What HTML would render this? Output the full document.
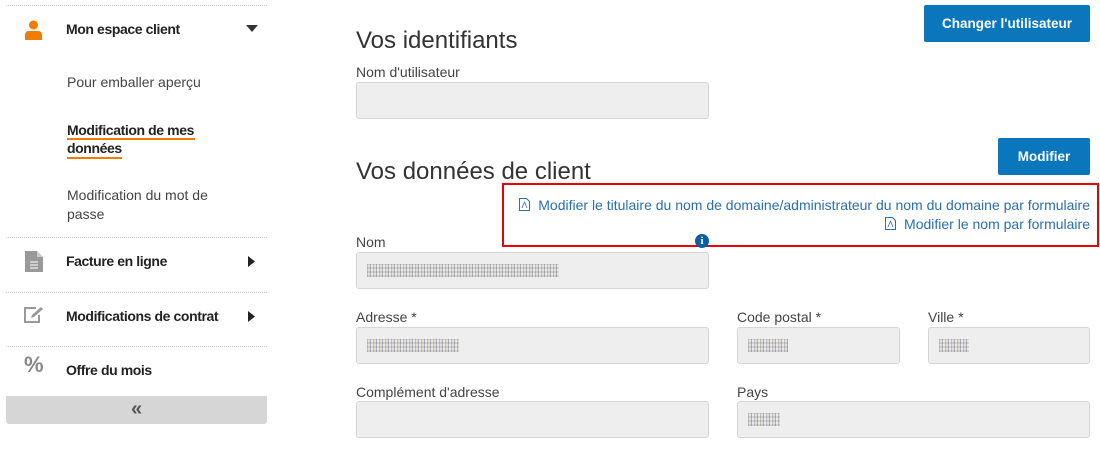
<!DOCTYPE html>
<html><head><meta charset="utf-8"><style>
*{margin:0;padding:0;box-sizing:border-box}
body{width:1100px;height:450px;background:#fff;font-family:"Liberation Sans",sans-serif;color:#333;position:relative;overflow:hidden}
.a{position:absolute;white-space:nowrap}
.sep{position:absolute;left:6px;width:261px;border-top:1px dotted #ccc;height:0}
.nav{font-size:14px;font-weight:bold;color:#222;letter-spacing:-0.4px}
.sub{font-size:14px;color:#444}
.h{font-size:24px;color:#333}
.lbl{font-size:14px;color:#444}
.in{position:absolute;background:#eee;border:1px solid #d6d6d6;border-radius:3px;height:37px}
.blur{position:absolute;top:11px;left:10px;height:13px;background:repeating-linear-gradient(90deg,#b0b0bc 0 1px,#e4ddd4 1px 3px,#9c9cab 3px 4px,#ececec 4px 6px),repeating-linear-gradient(0deg,#ddd 0 2px,transparent 2px 4px);background-blend-mode:multiply;opacity:.75}
.btn{position:absolute;background:#0a77bd;color:#fff;font-weight:bold;font-size:13.5px;border-radius:2px;display:flex;align-items:center;justify-content:center}
.lnk{font-size:14px;color:#2a6fb0;position:absolute;right:10px}
</style></head><body>
<div class="sep" style="top:5px"></div>
<svg class="a" style="left:25px;top:20px" width="17" height="20" viewBox="0 0 17 20"><circle cx="8.5" cy="5" r="4.5" fill="#f07d00"/><path d="M0 20V15Q0 11 4 11H13Q17 11 17 15V20Z" fill="#f07d00"/></svg>
<div class="a nav" style="left:66px;top:21px">Mon espace client</div>
<svg class="a" style="left:246px;top:25px" width="12" height="7"><path d="M0 0H12L6 7Z" fill="#333"/></svg>
<div class="a sub" style="left:67px;top:74px">Pour emballer aperçu</div>
<div class="a nav" style="left:67px;top:122px">Modification de mes</div>
<div class="a" style="left:67px;top:138px;width:128px;height:2px;background:#f07d00"></div>
<div class="a nav" style="left:67px;top:140px">données</div>
<div class="a" style="left:67px;top:157px;width:55px;height:2px;background:#f07d00"></div>
<div class="a sub" style="left:67px;top:187px">Modification du mot de</div>
<div class="a sub" style="left:67px;top:206px">passe</div>
<div class="sep" style="top:237px"></div>
<svg class="a" style="left:25px;top:251px" width="18" height="21" viewBox="0 0 18 21"><path d="M0 0H12L18 6V21H0Z" fill="#999"/><path d="M12 0V6H18" fill="#ccc"/><path d="M5 11H13M5 14H13M5 17H13" stroke="#eee" stroke-width="1.3"/></svg>
<div class="a nav" style="left:66px;top:253px">Facture en ligne</div>
<svg class="a" style="left:248px;top:256px" width="7" height="11"><path d="M0 0V11L7 5.5Z" fill="#222"/></svg>
<div class="sep" style="top:292px"></div>
<svg class="a" style="left:23px;top:306px" width="22" height="18" viewBox="0 0 22 18"><path d="M13 2H2V16H16V9" fill="none" stroke="#999" stroke-width="2"/><path d="M8 12L9 9L18 1L20 3L11 11Z" fill="#999"/></svg>
<div class="a nav" style="left:66px;top:308px">Modifications de contrat</div>
<svg class="a" style="left:248px;top:311px" width="7" height="11"><path d="M0 0V11L7 5.5Z" fill="#222"/></svg>
<div class="sep" style="top:346px"></div>
<div class="a" style="left:24px;top:352px;font-size:22px;font-weight:bold;color:#888">%</div>
<div class="a nav" style="left:66px;top:362px">Offre du mois</div>
<div class="a" style="left:6px;top:396px;width:261px;height:28px;background:#d6d6d6;border-radius:0 0 3px 3px;text-align:center;font-size:20px;line-height:26px;color:#555;font-weight:bold">«</div>

<div class="a h" style="left:356px;top:27px">Vos identifiants</div>
<div class="btn" style="left:924px;top:5px;width:166px;height:37px">Changer l'utilisateur</div>
<div class="a lbl" style="left:356px;top:64px">Nom d'utilisateur</div>
<div class="in" style="left:356px;top:82px;width:353px"></div>
<div class="btn" style="left:998px;top:138px;width:92px;height:37px">Modifier</div>
<div class="a h" style="left:356px;top:158px">Vos données de client</div>
<div class="a" style="left:502px;top:183px;width:597px;height:64px;border:2px solid #e8000b"></div>
<div class="lnk" style="top:197px"><svg width="11" height="13" style="vertical-align:-1px;margin-right:8px"><path d="M.5 .5H7.5L10.5 3.5V12.5H.5Z" fill="none" stroke="#2a6fb0"/><path d="M3 10L5.5 4L8 10" fill="none" stroke="#2a6fb0" stroke-width=".8"/></svg>Modifier le titulaire du nom de domaine/administrateur du nom du domaine par formulaire</div>
<div class="lnk" style="top:216px"><svg width="11" height="13" style="vertical-align:-1px;margin-right:8px"><path d="M.5 .5H7.5L10.5 3.5V12.5H.5Z" fill="none" stroke="#2a6fb0"/><path d="M3 10L5.5 4L8 10" fill="none" stroke="#2a6fb0" stroke-width=".8"/></svg>Modifier le nom par formulaire</div>
<div class="a" style="left:695px;top:234px;width:14px;height:14px;border-radius:50%;background:#0a5ea8;color:#fff;font-size:11px;font-weight:bold;text-align:center;line-height:14px;font-family:'Liberation Serif',serif">i</div>
<div class="a lbl" style="left:356px;top:234px">Nom</div>
<div class="in" style="left:356px;top:252px;width:353px"><div class="blur" style="width:192px"></div></div>
<div class="a lbl" style="left:356px;top:309px">Adresse *</div>
<div class="in" style="left:356px;top:327px;width:353px"><div class="blur" style="width:92px"></div></div>
<div class="a lbl" style="left:737px;top:309px">Code postal *</div>
<div class="in" style="left:737px;top:327px;width:163px"><div class="blur" style="width:40px"></div></div>
<div class="a lbl" style="left:928px;top:309px">Ville *</div>
<div class="in" style="left:928px;top:327px;width:162px"><div class="blur" style="width:30px"></div></div>
<div class="a lbl" style="left:356px;top:384px">Complément d'adresse</div>
<div class="in" style="left:356px;top:401px;width:353px"></div>
<div class="a lbl" style="left:737px;top:384px">Pays</div>
<div class="in" style="left:737px;top:401px;width:353px"><div class="blur" style="width:32px"></div></div>
</body></html>
